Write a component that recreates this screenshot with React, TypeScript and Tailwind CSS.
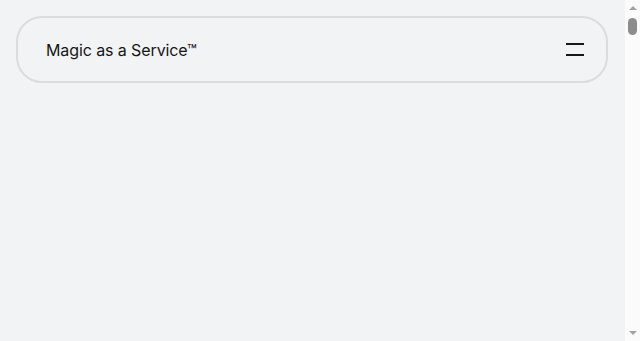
import React from "react";

export default function App() {
  return (
    <div className="flex h-screen bg-[#f2f3f5]" style={{ fontFamily: "Inter, 'Noto Sans', sans-serif" }}>
      <main className="min-w-0 flex-1 overflow-hidden p-4 pr-[17px]">
        <header className="flex h-[67px] items-center justify-between rounded-[26px] border-2 border-[#dcdcde] bg-[#f2f3f5] pl-[28px] pr-[19px]">
          <span className="text-[16px] leading-none text-[#161616] tracking-[-0.1px]">Magic as a Service™</span>
          <button className="flex h-6 w-6 flex-col items-center justify-center gap-[9px]" aria-label="Menu">
            <span className="block h-[2px] w-[18px] bg-[#161616]" />
            <span className="block h-[2px] w-[18px] bg-[#161616]" />
          </button>
        </header>
      </main>
      <div className="flex w-[15px] flex-col items-center bg-[#fbfbfb]" aria-hidden="true">
        <div className="flex h-[16px] items-center justify-center">
          <div className="h-0 w-0 border-x-[4px] border-b-[4px] border-x-transparent border-b-[#a3a3a3]" />
        </div>
        <div className="mt-[2px] h-[17px] w-[9px] rounded-full bg-[#8c8c8c]" />
        <div className="flex-1" />
        <div className="flex h-[16px] items-center justify-center">
          <div className="h-0 w-0 border-x-[4px] border-t-[4px] border-x-transparent border-t-[#a3a3a3]" />
        </div>
      </div>
    </div>
  );
}
